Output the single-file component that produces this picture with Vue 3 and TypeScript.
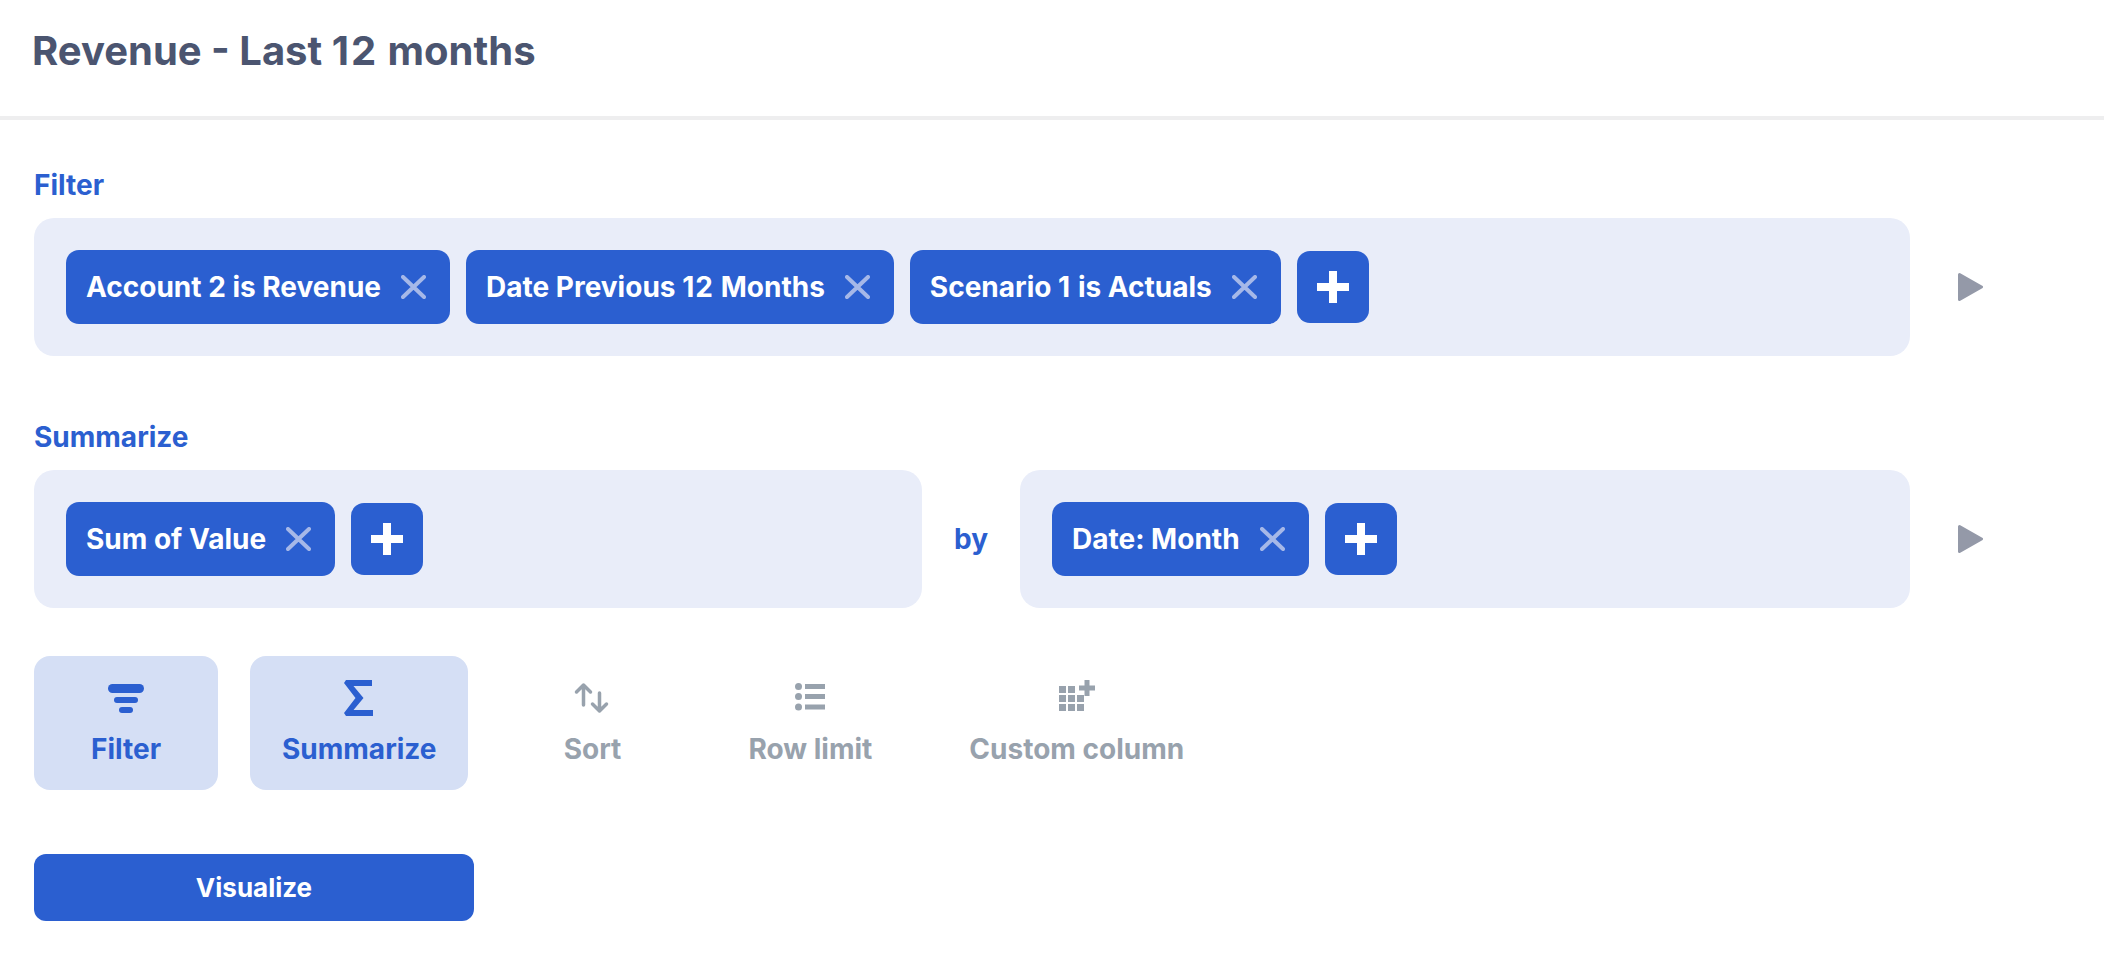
<script setup lang="ts">
interface Filter { before: string; num: string; after: string }
const filters: Filter[] = [
  { before: 'Account 2 is Revenue', num: '', after: '' },
  { before: 'Date Previous ', num: '12', after: ' Months' },
  { before: 'Scenario ', num: '1', after: ' is Actuals' },
]
</script>

<template>
  <div class="page">
    <header class="header"><h1 class="title">Revenue - Last <span class="num">12</span> months</h1></header>
    <main class="content">
      <section class="section first">
        <div class="label">Filter</div>
        <div class="row">
          <div class="panel">
            <div v-for="f in filters" :key="f.before" class="chip">
              <span>{{ f.before }}<span class="num">{{ f.num }}</span>{{ f.after }}</span>
              <svg class="x" viewBox="0 0 25 24"><path d="M2 2 23 22M23 2 2 22" /></svg>
            </div>
            <button class="plus"><svg viewBox="0 0 32 32"><path d="M16 0v32M0 16h32" /></svg></button>
          </div>
          <svg class="play" viewBox="0 0 25 28"><path d="M1.5 1.5 23.5 14 1.5 26.500Z" /></svg>
        </div>
      </section>

      <section class="section second">
        <div class="label">Summarize</div>
        <div class="row">
          <div class="split">
            <div class="panel half">
              <div class="chip">
                <span>Sum of Value</span>
                <svg class="x" viewBox="0 0 25 24"><path d="M2 2 23 22M23 2 2 22" /></svg>
              </div>
              <button class="plus"><svg viewBox="0 0 32 32"><path d="M16 0v32M0 16h32" /></svg></button>
            </div>
            <div class="by">by</div>
            <div class="panel half">
              <div class="chip">
                <span>Date: Month</span>
                <svg class="x" viewBox="0 0 25 24"><path d="M2 2 23 22M23 2 2 22" /></svg>
              </div>
              <button class="plus"><svg viewBox="0 0 32 32"><path d="M16 0v32M0 16h32" /></svg></button>
            </div>
          </div>
          <svg class="play" viewBox="0 0 25 28"><path d="M1.5 1.500 23.500 14 1.500 26.500Z" /></svg>
        </div>
      </section>

      <div class="tabs">
        <div class="tab active">
          <svg class="tab-icon" viewBox="0 0 36 36"><rect x="0" y="4" width="36" height="9" rx="4.500" /><rect x="6" y="17" width="24" height="6" rx="3" /><rect x="11" y="27" width="14" height="6" rx="3" /></svg>
          <span>Filter</span>
        </div>
        <div class="tab active">
          <svg class="tab-icon" viewBox="0 0 36 36"><path d="M5 0H31V6H12.500L22.500 18 12.500 30H32V36H5L3 33 14.500 18 3 3Z" /></svg>
          <span>Summarize</span>
        </div>
        <div class="tab">
          <svg class="tab-icon" viewBox="0 0 36 36"><path class="stroke" d="M9.500 25V5M2.500 12 9.500 5 16.500 12M25.500 13V31M18.500 24 25.500 31 32.500 24" /></svg>
          <span>Sort</span>
        </div>
        <div class="tab">
          <svg class="tab-icon" viewBox="0 0 36 36"><circle cx="6.500" cy="6.500" r="3.500" /><circle cx="6.500" cy="16.500" r="3.500" /><circle cx="6.500" cy="27" r="3.500" /><rect x="13" y="4" width="20" height="5" /><rect x="13" y="14" width="20" height="5" /><rect x="13" y="24.500" width="20" height="5" /></svg>
          <span>Row limit</span>
        </div>
        <div class="tab">
          <svg class="tab-icon" viewBox="0 0 36 36"><rect x="0" y="6" width="7" height="7" /><rect x="9" y="6" width="7" height="7" /><rect x="0" y="15" width="7" height="7" /><rect x="9" y="15" width="7" height="7" /><rect x="18" y="15" width="7" height="7" /><rect x="0" y="24" width="7" height="7" /><rect x="9" y="24" width="7" height="7" /><rect x="18" y="24" width="7" height="7" /><path class="stroke plain" d="M28 0v16M20 8h16" /></svg>
          <span>Custom column</span>
        </div>
      </div>

      <button class="visualize">Visualize</button>
    </main>
  </div>
</template>

<style>
html, body { margin: 0; background: #fff; }
</style>

<style scoped>
.page { width: 2104px; height: 966px; overflow: hidden; font-family: Inter, "Liberation Sans", sans-serif; font-weight: 700; box-sizing: border-box; }
.header { border-bottom: 4px solid #eeeeef; display: flex; align-items: center; padding: 0 32px 14px; height: 102px; }
.title { margin: 0; font-size: 40px; line-height: 48px; font-weight: 700; color: #4b5570; }
.title .num { letter-spacing: .05em; }
.content { padding-left: 34px; }
.first { padding-top: 49px; }
.second { padding-top: 65px; }
.label { font-size: 28px; line-height: 32px; color: #2b5fd0; margin-bottom: 17px; }
.row { display: flex; align-items: center; }
.panel { width: 1876px; height: 138px; padding: 32px; box-sizing: border-box; background: #e9edf9; border-radius: 20px; display: flex; align-items: center; gap: 16px; }
.split { width: 1876px; display: flex; align-items: center; }
.half { width: 888px; }
.half:last-child { width: 890px; }
.by { width: 98px; text-align: center; font-size: 28px; color: #2b5fd0; }
.chip { height: 74px; box-sizing: border-box; padding: 0 24px 0 20px; background: #2b5fd0; color: #fff; border-radius: 13px; display: flex; align-items: center; gap: 20px; font-size: 28px; white-space: nowrap; }
.chip .num { letter-spacing: .04em; }
.x { width: 25px; height: 24px; flex: none; }
.x path { fill: none; stroke: #a6b8e8; stroke-width: 4; stroke-linecap: round; }
.plus { width: 72px; height: 72px; padding: 0; border: 0; background: #2b5fd0; border-radius: 13px; display: flex; align-items: center; justify-content: center; }
.plus svg { width: 32px; height: 32px; }
.plus path { fill: none; stroke: #fff; stroke-width: 8; }
.play { width: 25px; height: 28px; margin-left: 48px; flex: none; }
.play path { fill: #9499a8; stroke: #9499a8; stroke-width: 3; stroke-linejoin: round; }
.tabs { display: flex; gap: 32px; margin-top: 48px; }
.tab { min-width: 184px; height: 134px; box-sizing: border-box; padding: 24px 32px 0; border-radius: 16px; display: flex; flex-direction: column; align-items: center; font-size: 28px; line-height: 32px; color: #98a2ad; fill: #98a2ad; }
.tab:last-child { margin-left: 1px; }
.tab.active { background: #d5dff5; color: #2b5fd0; fill: #2b5fd0; }
.tab-icon { width: 36px; height: 36px; margin-bottom: 17px; flex: none; }
.tab-icon .stroke { fill: none; stroke: #98a2ad; stroke-width: 3.500; stroke-linecap: round; stroke-linejoin: round; }
.tab-icon .plain { stroke-width: 5; stroke-linecap: butt; }
.visualize { display: block; margin-top: 64px; width: 440px; height: 67px; padding: 0; border: 0; border-radius: 12px; background: #2b5fd0; color: #fff; font-family: inherit; font-weight: 700; font-size: 26px; }
</style>
